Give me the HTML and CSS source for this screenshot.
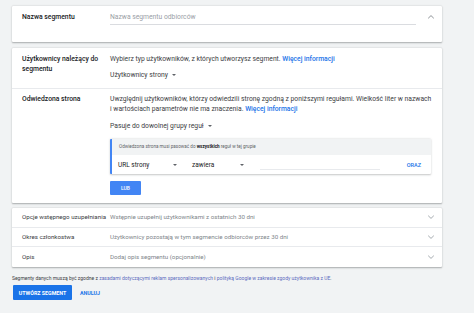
FILE: index.html
```html
<!DOCTYPE html>
<html lang="pl">
<head>
<meta charset="utf-8">
<link rel="stylesheet" href="styles.css">
</head>
<body>
<div class="page">
  <section class="card card-name">
    <div class="row">
      <div class="label">Nazwa segmentu</div>
      <div class="content"><div class="input placeholder">Nazwa segmentu odbiorców</div></div>
      <div class="chev"><svg width="8" height="6" viewBox="0 0 8 6"><path d="M1.2 4.3 L4 1.6 L6.8 4.3" fill="none" stroke="#80868b" stroke-width="0.9"/></svg></div>
    </div>
  </section>

  <section class="card card-main">
    <div class="row sec1">
      <div class="label">Użytkownicy należący do segmentu</div>
      <div class="content">
        <div class="text">Wybierz typ użytkowników, z których utworzysz segment. <a class="link">Więcej informacji</a></div>
        <div class="dropdown">Użytkownicy strony <span class="caret"></span></div>
      </div>
    </div>
    <div class="row sec2">
      <div class="label">Odwiedzona strona</div>
      <div class="content">
        <div class="text"><span class="line">Uwzględnij użytkowników, którzy odwiedzili stronę zgodną z poniższymi regułami. Wielkość liter w nazwach</span><br><span class="line">i wartościach parametrów nie ma znaczenia. <a class="link">Więcej informacji</a></span></div>
        <div class="dropdown dd2">Pasuje do dowolnej grupy reguł <span class="caret"></span></div>
        <div class="rulebox">
          <div class="rule-head">Odwiedzona strona musi pasować do <b>wszystkich</b> reguł w tej grupie</div>
          <div class="rule-row">
            <div class="sel sel1">URL strony <span class="caret"></span></div>
            <div class="sel sel2">zawiera <span class="caret"></span></div>
            <div class="rule-input"></div>
            <div class="oraz">ORAZ</div>
          </div>
        </div>
        <div class="btn-lub">LUB</div>
      </div>
    </div>
  </section>

  <section class="card card-list">
    <div class="row item">
      <div class="label">Opcje wstępnego uzupełniania</div>
      <div class="content muted">Wstępnie uzupełnij użytkownikami z ostatnich 30 dni</div>
      <div class="chev"><svg width="8" height="6" viewBox="0 0 8 6"><path d="M1.2 1.7 L4 4.4 L6.8 1.7" fill="none" stroke="#9aa0a6" stroke-width="0.9"/></svg></div>
    </div>
    <div class="row item">
      <div class="label">Okres członkostwa</div>
      <div class="content muted">Użytkownicy pozostają w tym segmencie odbiorców przez 30 dni</div>
      <div class="chev"><svg width="8" height="6" viewBox="0 0 8 6"><path d="M1.2 1.7 L4 4.4 L6.8 1.7" fill="none" stroke="#9aa0a6" stroke-width="0.9"/></svg></div>
    </div>
    <div class="row item">
      <div class="label">Opis</div>
      <div class="content muted">Dodaj opis segmentu (opcjonalnie)</div>
      <div class="chev"><svg width="8" height="6" viewBox="0 0 8 6"><path d="M1.2 1.7 L4 4.4 L6.8 1.7" fill="none" stroke="#9aa0a6" stroke-width="0.9"/></svg></div>
    </div>
  </section>

  <p class="policy">Segmenty danych muszą być zgodne z <a class="plink">zasadami dotyczącymi reklam spersonalizowanych</a> i <a class="plink">polityką Google w zakresie zgody użytkownika z UE</a>.</p>

  <div class="actions">
    <div class="btn-primary">UTWÓRZ SEGMENT</div>
    <div class="btn-text">ANULUJ</div>
  </div>
</div>
</body>
</html>
```

FILE: styles.css
```css
* { box-sizing: border-box; }
html, body { margin: 0; padding: 0; }
body {
  background: #f1f3f4;
  font-family: Roboto, "Noto Sans", Arial, sans-serif;
  color: #202124;
  width: 474px;
  height: 313px;
  overflow: hidden;
}
.page {
  padding: 6px 0 0 12px;
  width: 442px;
}
.card {
  background: #fff;
  box-shadow: 0 0.5px 1.5px rgba(60,64,67,0.3), 0 1px 2px rgba(60,64,67,0.12);
  border-radius: 1px;
}
.row {
  display: grid;
  grid-template-columns: 88px 1fr 22px;
  padding: 0 0 0 10px;
}
.label {
  font-size: 6.8px;
  line-height: 10px;
  font-weight: 500;
  color: #202124;
  padding-right: 6px;
}
.content {
  font-size: 6.75px;
  line-height: 10px;
  color: #3c4043;
}
.chev {
  display: flex;
  justify-content: center;
  align-items: flex-start;
}
.card-name { height: 36px; padding-top: 6px; }
.card-name .chev { padding-top: 2px; }
.card-name .input {
  height: 13px;
  border-bottom: 1px solid #dadce0;
  margin-right: 4px;
  color: #9aa0a6;
}
.card-main { margin-top: 6px; padding-bottom: 8px; }
.sec1 { padding-top: 6px; padding-bottom: 8px; border-bottom: 1px solid #e8eaed; }
.sec1 .content { grid-column: 2 / 4; padding-right: 12px; }
.sec2 { padding-top: 5px; }
.sec2 .content { grid-column: 2 / 4; padding-right: 11px; }
.sec2 .text { white-space: nowrap; }
.link { color: #1a73e8; font-weight: 500; }
.dropdown {
  margin-top: 6px;
  color: #3c4043;
  display: inline-flex;
  align-items: center;
}
.dd2 { margin-top: 7px; }
.caret {
  display: inline-block;
  width: 0; height: 0;
  border-left: 2px solid transparent;
  border-right: 2px solid transparent;
  border-top: 2px solid #5f6368;
  margin-left: 4px;
}
.rulebox {
  margin-top: 8px;
  border-left: 2px solid #4285f4;
  border-radius: 1px;
  box-shadow: 0 0.5px 2px rgba(60,64,67,0.3);
  background: #fff;
}
.rule-head {
  background: #f1f3f4;
  height: 16px;
  font-size: 4.6px;
  line-height: 16px;
  padding-left: 7px;
  color: #5f6368;
}
.rule-head b { color: #202124; }
.rule-row {
  height: 19px;
  display: flex;
  align-items: center;
  padding-left: 6px;
  font-size: 6.5px;
  color: #202124;
}
.sel {
  display: flex;
  align-items: center;
  justify-content: space-between;
  height: 19px;
}
.sel1 { width: 59px; }
.sel2 { width: 59px; margin-left: 8px; padding-left: 7px; }
.rule-input {
  width: 120px;
  margin-left: 16px;
  height: 11px;
  border-bottom: 1px solid #e8eaed;
}
.oraz {
  margin-left: auto;
  margin-right: 10px;
  color: #1a73e8;
  font-size: 5.5px;
  font-weight: 500;
}
.btn-lub {
  margin-top: 7px;
  width: 31px;
  height: 14px;
  background: #4285f4;
  color: #fff;
  font-size: 5px;
  font-weight: 500;
  display: flex;
  align-items: center;
  justify-content: center;
  border-radius: 1px;
}
.card-list { margin-top: 5px; }
.item {
  height: 19.7px;
  align-items: center;
  border-bottom: 1px solid #e8eaed;
}
.item:last-child { border-bottom: none; }
.item .label { font-weight: 400; font-size: 6.2px; white-space: nowrap; padding-right: 0; color: #3c4043; }
.item .content { color: #80868b; font-size: 6.2px; }
.item .chev { align-items: center; }
.muted { color: #80868b; }
.policy {
  margin: 7px 0 0 0;
  font-size: 5px;
  line-height: 8px;
  color: #3c4043;
}
.plink { color: #5c6bc0; }
.actions {
  display: flex;
  align-items: center;
  margin-top: 3px;
  padding-left: 1px;
}
.btn-primary {
  width: 59px;
  height: 15px;
  background: #1a73e8;
  color: #fff;
  font-size: 5.3px;
  font-weight: 700;
  display: flex;
  align-items: center;
  justify-content: center;
  border-radius: 1px;
}
.btn-text {
  margin-left: 8px;
  color: #1a73e8;
  font-size: 5.3px;
  font-weight: 700;
}
```
